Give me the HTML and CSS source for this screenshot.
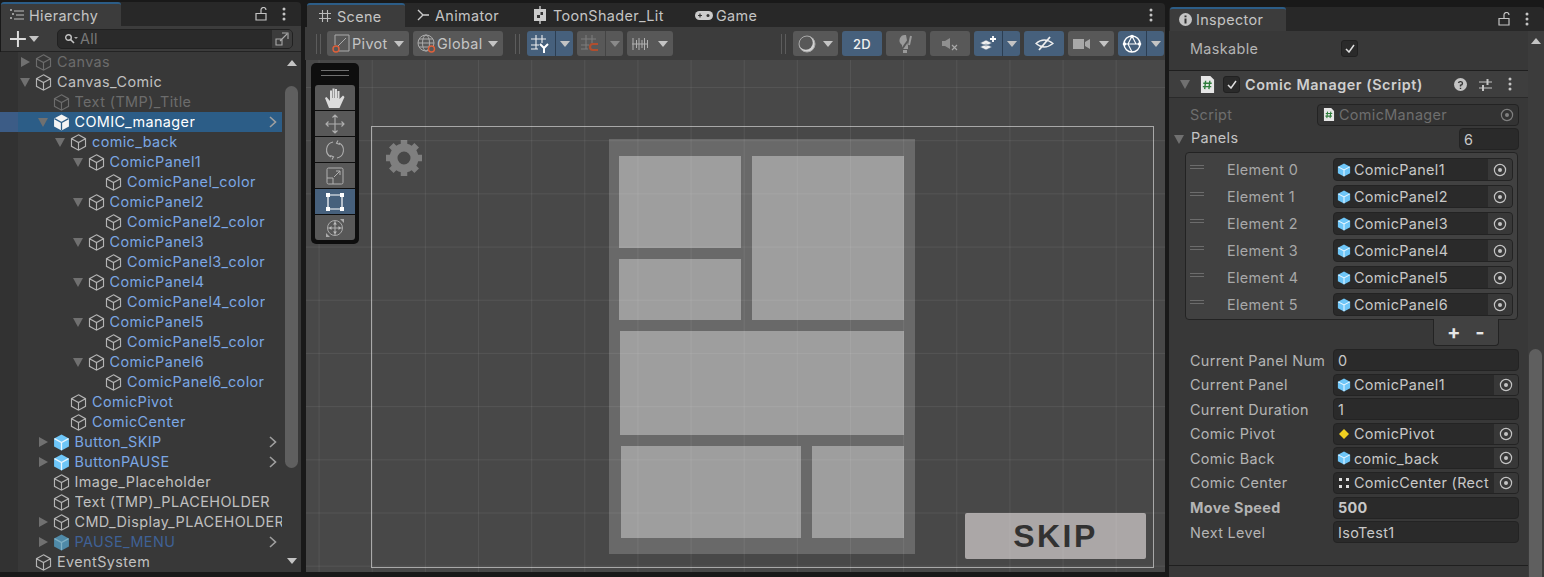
FILE: index.html
```html
<!DOCTYPE html>
<html>
<head>
  <meta charset="UTF-8">
  <title>Unity Editor</title>
  <link rel="stylesheet" href="styles.css">
</head>
<body>
  <svg class="defs" width="0" height="0">
    <symbol id="cube" viewBox="0 0 16 16">
      <path d="M8 .8 14.6 4.4V11.6L8 15.2 1.4 11.6V4.4ZM1.4 4.4 8 8 14.6 4.4M8 8V15.2" fill="none" stroke="currentColor" stroke-width="1.1"/>
    </symbol>
    <symbol id="prefab" viewBox="0 0 16 16">
      <path d="M8 .5 15 4.2V11.8L8 15.5 1 11.8V4.2Z" fill="currentColor"/>
      <path class="seam" d="M1.4 4.4 8 8 14.6 4.4M8 8V15.2" fill="none" stroke-width="1.2"/>
    </symbol>
    <symbol id="chev" viewBox="0 0 8 12">
      <path d="M1 1 6.5 6 1 11" fill="none" stroke="currentColor" stroke-width="1.6"/>
    </symbol>
    <symbol id="lock" viewBox="0 0 12 14">
      <path d="M1 6.5H11V13H1ZM6 6.5V3A2.5 2.5 0 0 1 11 3" fill="none" stroke="currentColor" stroke-width="1.2"/>
    </symbol>
    <symbol id="dots" viewBox="0 0 4 14">
      <circle cx="2" cy="2" r="1.5" fill="currentColor"/><circle cx="2" cy="7" r="1.5" fill="currentColor"/><circle cx="2" cy="12" r="1.5" fill="currentColor"/>
    </symbol>
    <symbol id="target" viewBox="0 0 14 14">
      <circle cx="7" cy="7" r="5.6" fill="none" stroke="currentColor" stroke-width="1.2"/><circle cx="7" cy="7" r="2" fill="currentColor"/>
    </symbol>
    <symbol id="script" viewBox="0 0 16 18">
      <path d="M1 0H11L15 4V18H1Z" fill="#e6e6e6"/>
      <path d="M6 5 5 14M10.500 5 9.500 14M3.500 7.700H12.500M3 11.300H12" stroke="#2f7d3c" stroke-width="1.5"/>
    </symbol>
  </svg>

  <section class="panel hierarchy">
    <div class="tabbar">
      <div class="tab active hier-tab">
        <svg class="tab-icon" width="14" height="12" viewBox="0 0 14 12"><path d="M4 2H14M6 6H14M4 10H14" stroke="#bbb" stroke-width="1.2"/><path d="M0 1H2M2 5H4M0 9H2" stroke="#bbb" stroke-width="1.6"/></svg>
        <span>Hierarchy</span>
      </div>
      <div class="tab-actions">
        <svg class="lock" width="12" height="14"><use href="#lock"/></svg>
        <svg class="dots" width="4" height="14"><use href="#dots"/></svg>
      </div>
    </div>
    <div class="hier-toolbar">
      <svg class="plus" width="16" height="16" viewBox="0 0 16 16"><path d="M8 0V16M0 8H16" stroke="#ddd" stroke-width="2"/></svg>
      <span class="caret"></span>
      <div class="search">
        <svg width="14" height="12" viewBox="0 0 14 12"><circle cx="4.500" cy="4.500" r="2.800" fill="none" stroke="#c4c4c4" stroke-width="1.400"/><path d="M6.500 6.500 10 10" stroke="#c4c4c4" stroke-width="1.600"/><path d="M10 4H14L12 6Z" fill="#aaa"/></svg>
        <span>All</span>
        <div class="search-btn">
          <svg width="14" height="14" viewBox="0 0 14 14"><path d="M1 7V13H7V7ZM7 1H13V7M5 9 12 2" fill="none" stroke="#aaa" stroke-width="1.100"/></svg>
        </div>
      </div>
    </div>
    <div class="hier-body">
      <div class="tree">
        <div class="row l0 off"><i class="arrow right"></i><svg class="ico"><use href="#cube"/></svg><span>Canvas</span></div>
        <div class="row l0"><i class="arrow down"></i><svg class="ico"><use href="#cube"/></svg><span>Canvas_Comic</span></div>
        <div class="row l1 off"><i class="arrow none"></i><svg class="ico"><use href="#cube"/></svg><span>Text (TMP)_Title</span></div>
        <div class="row l1 selected"><i class="arrow down"></i><svg class="ico"><use href="#prefab"/></svg><span>COMIC_manager</span><svg class="chev"><use href="#chev"/></svg></div>
        <div class="row l2 blue"><i class="arrow down"></i><svg class="ico"><use href="#cube"/></svg><span>comic_back</span></div>
        <div class="row l3 blue"><i class="arrow down"></i><svg class="ico"><use href="#cube"/></svg><span>ComicPanel1</span></div>
        <div class="row l4 blue"><i class="arrow none"></i><svg class="ico"><use href="#cube"/></svg><span>ComicPanel_color</span></div>
        <div class="row l3 blue"><i class="arrow down"></i><svg class="ico"><use href="#cube"/></svg><span>ComicPanel2</span></div>
        <div class="row l4 blue"><i class="arrow none"></i><svg class="ico"><use href="#cube"/></svg><span>ComicPanel2_color</span></div>
        <div class="row l3 blue"><i class="arrow down"></i><svg class="ico"><use href="#cube"/></svg><span>ComicPanel3</span></div>
        <div class="row l4 blue"><i class="arrow none"></i><svg class="ico"><use href="#cube"/></svg><span>ComicPanel3_color</span></div>
        <div class="row l3 blue"><i class="arrow down"></i><svg class="ico"><use href="#cube"/></svg><span>ComicPanel4</span></div>
        <div class="row l4 blue"><i class="arrow none"></i><svg class="ico"><use href="#cube"/></svg><span>ComicPanel4_color</span></div>
        <div class="row l3 blue"><i class="arrow down"></i><svg class="ico"><use href="#cube"/></svg><span>ComicPanel5</span></div>
        <div class="row l4 blue"><i class="arrow none"></i><svg class="ico"><use href="#cube"/></svg><span>ComicPanel5_color</span></div>
        <div class="row l3 blue"><i class="arrow down"></i><svg class="ico"><use href="#cube"/></svg><span>ComicPanel6</span></div>
        <div class="row l4 blue"><i class="arrow none"></i><svg class="ico"><use href="#cube"/></svg><span>ComicPanel6_color</span></div>
        <div class="row l2 blue"><i class="arrow none"></i><svg class="ico"><use href="#cube"/></svg><span>ComicPivot</span></div>
        <div class="row l2 blue"><i class="arrow none"></i><svg class="ico"><use href="#cube"/></svg><span>ComicCenter</span></div>
        <div class="row l1 blue"><i class="arrow right"></i><svg class="ico pf"><use href="#prefab"/></svg><span>Button_SKIP</span><svg class="chev"><use href="#chev"/></svg></div>
        <div class="row l1 blue"><i class="arrow right"></i><svg class="ico pf"><use href="#prefab"/></svg><span>ButtonPAUSE</span><svg class="chev"><use href="#chev"/></svg></div>
        <div class="row l1"><i class="arrow none"></i><svg class="ico"><use href="#cube"/></svg><span>Image_Placeholder</span></div>
        <div class="row l1"><i class="arrow none"></i><svg class="ico"><use href="#cube"/></svg><span>Text (TMP)_PLACEHOLDER</span></div>
        <div class="row l1"><i class="arrow right"></i><svg class="ico"><use href="#cube"/></svg><span>CMD_Display_PLACEHOLDER</span></div>
        <div class="row l1 blue dim"><i class="arrow right"></i><svg class="ico pf"><use href="#prefab"/></svg><span>PAUSE_MENU</span><svg class="chev"><use href="#chev"/></svg></div>
        <div class="row l0"><i class="arrow none"></i><svg class="ico"><use href="#cube"/></svg><span>EventSystem</span></div>
      </div>
      <div class="scrollbar hier-scroll">
        <i class="sb-up"></i>
        <div class="sb-thumb"></div>
        <i class="sb-down"></i>
      </div>
    </div>
  </section>

  <section class="panel scene">
    <div class="tabbar">
      <div class="tab active scene-tab">
        <svg width="12" height="12" viewBox="0 0 12 12"><path d="M3.500 0V12M8.500 0V12M0 3.500H12M0 8.500H12" stroke="#bbb" stroke-width="1.100"/></svg>
        <span>Scene</span>
      </div>
      <div class="tab anim-tab">
        <svg width="13" height="12" viewBox="0 0 13 12"><path d="M1 1 6 6 1 11M6 6H12" fill="none" stroke="#ccc" stroke-width="1.400"/></svg>
        <span>Animator</span>
      </div>
      <div class="tab toon-tab">
        <svg width="14" height="18" viewBox="0 0 14 18"><path d="M1 3H13V15H1Z" fill="#ccc"/><path d="M6 0H8V3H6ZM6 15H8V18H6Z" fill="#999"/><path d="M4 9H7V12H4ZM7.500 6H10V9H7.500Z" fill="#333"/></svg>
        <span>ToonShader_Lit</span>
      </div>
      <div class="tab game-tab">
        <svg width="18" height="11" viewBox="0 0 18 11"><rect y="1" width="18" height="9" rx="4.500" fill="#ccc"/><path d="M3 5.500H7M5 3.500V7.500" stroke="#333" stroke-width="1.200"/><circle cx="13" cy="5.500" r="1.500" fill="#333"/></svg>
        <span>Game</span>
      </div>
      <div class="tab-actions">
        <svg class="dots" width="4" height="14"><use href="#dots"/></svg>
      </div>
    </div>
    <div class="scene-toolbar">
      <i class="grip"></i>
      <div class="btn pivot">
        <svg width="18" height="20" viewBox="0 0 18 20"><path d="M3 1H17V17H7M3 11V1M14 4 6 12" fill="none" stroke="#aaa" stroke-width="1"/><circle cx="4" cy="15" r="3" fill="none" stroke="#e0603a" stroke-width="1.400"/></svg>
        <span>Pivot</span><b class="caret"></b>
      </div>
      <div class="btn global">
        <svg width="20" height="20" viewBox="0 0 20 20"><circle cx="9" cy="9" r="8" fill="none" stroke="#aaa"/><ellipse cx="9" cy="9" rx="3.500" ry="8" fill="none" stroke="#aaa"/><path d="M1 9H17M2 5H16M2 13H16" stroke="#aaa"/><circle cx="14.500" cy="15" r="3" fill="#585858" stroke="#e0603a" stroke-width="1.400"/></svg>
        <span>Global</span><b class="caret"></b>
      </div>
      <i class="grip gap-l"></i>
      <div class="btn split on grid-btn">
        <span class="main">
          <svg width="20" height="18" viewBox="0 0 20 18"><path d="M5 0V14M11 0V8M0 4H15M0 10H8M0 14H7" stroke="#eee" stroke-width="1.100"/><path d="M9 9 13 13 17 9M13 13V18" fill="none" stroke="#fff" stroke-width="2"/></svg>
        </span>
        <span class="drop"><b class="caret"></b></span>
      </div>
      <div class="btn split snap-btn">
        <span class="main">
          <svg width="20" height="18" viewBox="0 0 20 18"><path d="M5 0V14M11 0V8M0 4H15M0 10H8M0 14H7" stroke="#7c7c7c" stroke-width="1.100"/><path d="M17 9H12A3 3 0 0 0 12 15H17" fill="none" stroke="#b04e2e" stroke-width="2.200"/></svg>
        </span>
        <span class="drop nosep"><b class="caret dim"></b></span>
      </div>
      <div class="btn ruler-btn">
        <svg width="17" height="14" viewBox="0 0 17 14"><path d="M0 7H16M1 1V13M4.500 3V11M7 1V13M10 3V11M12.500 1V13M15.500 3V11" stroke="#b0b0b0"/></svg>
        <b class="caret"></b>
      </div>

      <i class="grip push"></i>
      <div class="btn shade-btn">
        <svg width="18" height="18" viewBox="0 0 18 18"><circle cx="9" cy="9" r="8" fill="#d2d2d2"/><circle cx="7.800" cy="7.800" r="7" fill="#585858"/><circle cx="9" cy="9" r="8" fill="none" stroke="#a8a8a8"/></svg>
        <b class="caret"></b>
      </div>
      <div class="btn on txt2d">2D</div>
      <div class="btn icon-only">
        <svg width="18" height="20" viewBox="0 0 18 20"><path d="M9 1A5.500 5.500 0 0 0 5 11V15H11V12Z" fill="#9a9a9a"/><path d="M6 16H10V19H6Z" fill="#9a9a9a"/><path d="M15 1 5 15" stroke="#585858" stroke-width="2"/><path d="M14 2 12 11" stroke="#9a9a9a" stroke-width="2"/></svg>
      </div>
      <div class="btn icon-only">
        <svg width="16" height="14" viewBox="0 0 16 14"><path d="M0 4H3L8 1V12L3 9H0Z" fill="#909090"/><path d="M10 8 15 13M15 8 10 13" stroke="#a8a8a8" stroke-width="1.200"/></svg>
      </div>
      <div class="btn split on fx-btn">
        <span class="main">
          <svg width="18" height="16" viewBox="0 0 18 16"><path d="M1 7 7 4 13 7 7 10ZM1 11 7 8 13 11 7 14Z" fill="#f0f0f0" stroke="#46607c" stroke-width=".6"/><path d="M14 0V6M11 3H17" stroke="#fff" stroke-width="1.800"/></svg>
        </span>
        <span class="drop"><b class="caret"></b></span>
      </div>
      <div class="btn on icon-only hide-btn">
        <svg width="19" height="15" viewBox="0 0 19 15"><path d="M1 7.500Q9 .5 18 7.500 9 14.500 1 7.500Z" fill="none" stroke="#eee" stroke-width="1.300"/><path d="M4 14 15 1" stroke="#eee" stroke-width="1.800"/></svg>
      </div>
      <div class="btn cam-btn">
        <svg width="17" height="12" viewBox="0 0 17 12"><path d="M0 1H11V11H0ZM12 4 17 1V11L12 8Z" fill="#a8a8a8"/></svg>
        <b class="caret"></b>
      </div>
      <div class="btn split on gizmo-btn">
        <span class="main">
          <svg width="20" height="20" viewBox="0 0 20 20"><circle cx="10" cy="10" r="8" fill="none" stroke="#fff" stroke-width="1.400"/><path d="M2 10H18M10 2 6 10 10 18M10 2 14 10" fill="none" stroke="#fff" stroke-width="1.100"/><circle cx="10" cy="2.500" r="1.800" fill="#fff"/><circle cx="2.500" cy="10" r="1.800" fill="#fff"/><circle cx="17.500" cy="10" r="1.800" fill="#fff"/></svg>
        </span>
        <span class="drop"><b class="caret"></b></span>
      </div>
    </div>

    <div class="viewport">
      <div class="frame"></div>
      <svg class="gear" width="38" height="38" viewBox="0 0 38 38"><circle cx="19" cy="19" r="10.500" fill="none" stroke="#7f7f7f" stroke-width="8"/><g stroke="#7f7f7f" stroke-width="6.500"><path d="M19 1V8M19 30V37M1 19H8M30 19H37M6.300 6.300 11 11M27 27 31.700 31.700M6.300 31.700 11 27M27 11 31.700 6.300"/></g></svg>
      <div class="page"></div>
      <div class="cell c1"></div>
      <div class="cell c2"></div>
      <div class="cell c3"></div>
      <div class="cell c4"></div>
      <div class="cell c5"></div>
      <div class="cell c6"></div>
      <div class="skip">SKIP</div>
      <div class="grid-lines"></div>
      <div class="tools">
        <div class="tools-grip"></div>
        <div class="tool">
          <svg width="22" height="22" viewBox="0 0 22 22"><path d="M5 21 1 11 2.500 10 6 14V3.500H8V11H8.500V1.500H10.500V11H11V2H13V11H13.500V4H15.500V12L19 8.500 20.500 10 15.500 21Z" fill="#dcdcdc"/></svg>
        </div>
        <div class="tool">
          <svg width="20" height="20" viewBox="0 0 20 20"><path d="M10 1V19M1 10H19M7.500 3.500 10 1 12.500 3.500M7.500 16.500 10 19 12.500 16.500M3.500 7.500 1 10 3.500 12.500M16.500 7.500 19 10 16.500 12.500" fill="none" stroke="#b0b0b0" stroke-width="1.100"/></svg>
        </div>
        <div class="tool">
          <svg width="20" height="20" viewBox="0 0 20 20"><path d="M8 2A8 8 0 0 0 6 17M12 18A8 8 0 0 0 14 3M13 .5 11.500 3.200 14.800 4.500M7 19.500 8.500 16.800 5.200 15.500" fill="none" stroke="#b0b0b0" stroke-width="1.100"/></svg>
        </div>
        <div class="tool">
          <svg width="18" height="18" viewBox="0 0 18 18"><rect x="1" y="1" width="16" height="16" rx="1.500" fill="none" stroke="#b0b0b0"/><path d="M1 11H7V17M8 10 14 4M10 4H14V8" fill="none" stroke="#b0b0b0"/></svg>
        </div>
        <div class="tool on">
          <svg width="18" height="18" viewBox="0 0 18 18"><path d="M3 2H15M3 16H15M2 3V15M16 3V15" stroke="#fff" stroke-width="1.200"/><path d="M0 0H4V4H0ZM14 0H18V4H14ZM0 14H4V18H0ZM14 14H18V18H14Z" fill="#fff"/></svg>
        </div>
        <div class="tool">
          <svg width="20" height="20" viewBox="0 0 20 20"><circle cx="10" cy="10" r="7.500" fill="none" stroke="#aaa"/><path d="M10 3V17M3 10H17" stroke="#aaa" stroke-width="1.100"/><path d="M10 4 8 6.500H12ZM10 16 8 13.500H12ZM4 10 6.500 8V12ZM16 10 13.500 8V12Z" fill="#bbb"/><path d="M15 1H19V5ZM1 15V19H5Z" fill="#aaa"/></svg>
        </div>
      </div>
    </div>
  </section>

  <section class="panel inspector">
    <div class="tabbar">
      <div class="tab active insp-tab">
        <svg width="13" height="13" viewBox="0 0 13 13"><circle cx="6.500" cy="6.500" r="6.500" fill="#c4c4c4"/><path d="M5.500 2.500H7.500V4.300H5.500ZM5.500 5.500H7.500V10.500H5.500Z" fill="#333"/></svg>
        <span>Inspector</span>
      </div>
      <div class="tab-actions">
        <svg class="lock" width="12" height="14"><use href="#lock"/></svg>
        <svg class="dots" width="4" height="14"><use href="#dots"/></svg>
      </div>
    </div>
    <div class="insp-body">
      <div class="insp-main">
        <div class="prop maskable">
          <label>Maskable</label>
          <span class="check"><svg width="10" height="9" viewBox="0 0 10 9"><path d="M1 5 4 8 9 1" fill="none" stroke="#e0e0e0" stroke-width="1.500"/></svg></span>
        </div>
        <div class="comp-head">
          <i class="arrow down"></i>
          <svg class="script-ico" width="15" height="17"><use href="#script"/></svg>
          <span class="check"><svg width="10" height="9" viewBox="0 0 10 9"><path d="M1 5 4 8 9 1" fill="none" stroke="#e0e0e0" stroke-width="1.500"/></svg></span>
          <strong>Comic Manager (Script)</strong>
          <div class="comp-actions">
            <svg width="13" height="13" viewBox="0 0 13 13"><circle cx="6.500" cy="6.500" r="6.500" fill="#c4c4c4"/><path d="M4.500 5A2 1.800 0 1 1 6.500 7.200V8.500M6.500 9.700V11" fill="none" stroke="#333" stroke-width="1.400"/></svg>
            <svg width="13" height="13" viewBox="0 0 13 13"><path d="M0 4H13M0 10H13" stroke="#c4c4c4"/><path d="M8.500 1V7M4 7V13" stroke="#c4c4c4" stroke-width="2"/></svg>
            <svg class="dots" width="4" height="14"><use href="#dots"/></svg>
          </div>
        </div>

        <div class="prop script-row off">
          <label>Script</label>
          <div class="field obj disabled">
            <svg class="mini" width="12" height="13"><use href="#script"/></svg>
            <span class="val">ComicManager</span>
            <svg class="pick" width="14" height="14"><use href="#target"/></svg>
          </div>
        </div>
        <div class="panels-row">
          <i class="arrow down"></i>
          <span>Panels</span>
          <div class="field size-field">6</div>
        </div>
        <div class="list">
          <div class="elem"><i class="handle"></i><label>Element 0</label><div class="field obj"><svg class="mini"><use href="#prefab"/></svg><span class="val">ComicPanel1</span><span class="pick-box"><svg width="14" height="14"><use href="#target"/></svg></span></div></div>
          <div class="elem"><i class="handle"></i><label>Element 1</label><div class="field obj"><svg class="mini"><use href="#prefab"/></svg><span class="val">ComicPanel2</span><span class="pick-box"><svg width="14" height="14"><use href="#target"/></svg></span></div></div>
          <div class="elem"><i class="handle"></i><label>Element 2</label><div class="field obj"><svg class="mini"><use href="#prefab"/></svg><span class="val">ComicPanel3</span><span class="pick-box"><svg width="14" height="14"><use href="#target"/></svg></span></div></div>
          <div class="elem"><i class="handle"></i><label>Element 3</label><div class="field obj"><svg class="mini"><use href="#prefab"/></svg><span class="val">ComicPanel4</span><span class="pick-box"><svg width="14" height="14"><use href="#target"/></svg></span></div></div>
          <div class="elem"><i class="handle"></i><label>Element 4</label><div class="field obj"><svg class="mini"><use href="#prefab"/></svg><span class="val">ComicPanel5</span><span class="pick-box"><svg width="14" height="14"><use href="#target"/></svg></span></div></div>
          <div class="elem"><i class="handle"></i><label>Element 5</label><div class="field obj"><svg class="mini"><use href="#prefab"/></svg><span class="val">ComicPanel6</span><span class="pick-box"><svg width="14" height="14"><use href="#target"/></svg></span></div></div>
        </div>
        <div class="list-foot">
          <div class="add-remove"><span>+</span><span>-</span></div>
        </div>

        <div class="props">
          <div class="prop"><label>Current Panel Num</label><div class="field">0</div></div>
          <div class="prop"><label>Current Panel</label><div class="field obj"><svg class="mini"><use href="#prefab"/></svg><span class="val">ComicPanel1</span><span class="pick-box"><svg width="14" height="14"><use href="#target"/></svg></span></div></div>
          <div class="prop"><label>Current Duration</label><div class="field">1</div></div>
          <div class="prop"><label>Comic Pivot</label><div class="field obj"><svg class="mini" viewBox="0 0 14 14"><path d="M7 2 12 7 7 12 2 7Z" fill="#f0d020"/></svg><span class="val">ComicPivot</span><span class="pick-box"><svg width="14" height="14"><use href="#target"/></svg></span></div></div>
          <div class="prop"><label>Comic Back</label><div class="field obj"><svg class="mini"><use href="#prefab"/></svg><span class="val">comic_back</span><span class="pick-box"><svg width="14" height="14"><use href="#target"/></svg></span></div></div>
          <div class="prop"><label>Comic Center</label><div class="field obj"><svg class="mini" viewBox="0 0 14 14"><path d="M2 2H5V5H2ZM9 2H12V5H9ZM2 9H5V12H2ZM9 9H12V12H9Z" fill="#ddd"/></svg><span class="val">ComicCenter (Rect T</span><span class="pick-box"><svg width="14" height="14"><use href="#target"/></svg></span></div></div>
          <div class="prop changed"><label>Move Speed</label><div class="field">500</div></div>
          <div class="prop"><label>Next Level</label><div class="field">IsoTest1</div></div>
        </div>
        <div class="comp-end"></div>
      </div>
      <div class="scrollbar insp-scroll">
        <i class="sb-up"></i>
        <div class="sb-thumb"></div>
      </div>
    </div>
  </section>
</body>
</html>
```

FILE: styles.css
```css
* {
  box-sizing: border-box;
}
html, body {
  height: 100%;
}
body {
  margin: 0;
  display: flex;
  height: 577px;
  overflow: hidden;
  background: #191919;
  font-family: Inter, "Noto Sans", sans-serif;
  font-size: 14.4px;
  letter-spacing: .36px;
  color: #c4c4c4;
}
.defs {
  position: absolute;
}
.seam {
  stroke: var(--seam, #e8f6ff);
}
.panel {
  display: flex;
  flex-direction: column;
  overflow: hidden;
}

/* tabs */
.tabbar {
  display: flex;
  align-items: flex-end;
  flex: none;
  background: #282828;
  border-radius: 4px 4px 0 0;
}
.tab {
  display: flex;
  align-items: center;
  height: 24px;
  gap: 7px;
  color: #c4c4c4;
  white-space: nowrap;
}
.tab.active {
  background: #3c3c3c;
  border-top: 2px solid #2c5d87;
  border-radius: 3px 3px 0 0;
}
.tab-actions {
  margin-left: auto;
  display: flex;
  align-items: center;
  align-self: center;
  gap: 15px;
  color: #c4c4c4;
}

/* hierarchy */
.hierarchy {
  width: 301px;
  margin: 2px 4px 5px 0;
}
.hierarchy .tabbar {
  height: 24px;
  margin-left: 1px;
}
.hier-tab {
  width: 120px;
  padding-left: 9px;
  gap: 5px;
}
.hierarchy .tab-actions {
  padding-right: 15px;
}
.hier-toolbar {
  display: flex;
  align-items: center;
  flex: none;
  height: 26px;
  padding: 0 8px 0 9px;
  margin-left: 1px;
  background: #3c3c3c;
  border-bottom: 1px solid #232323;
}
.caret {
  display: inline-block;
  width: 0;
  height: 0;
  border: 5px solid transparent;
  border-top: 6px solid #c4c4c4;
  border-bottom: 0;
}
.caret.dim {
  border-top-color: #8a8a8a;
}
.plus {
  margin-right: 3px;
}
.search {
  display: flex;
  align-items: center;
  gap: 2px;
  width: 238px;
  height: 20px;
  margin-left: 18px;
  padding-left: 6px;
  background: #2a2a2a;
  border: 1px solid #212121;
  border-radius: 5px;
  color: #787878;
}
.search-btn {
  margin-left: auto;
  display: flex;
  align-items: center;
  justify-content: center;
  width: 20px;
  height: 18px;
  background: #3c3c3c;
  border-radius: 0 4px 4px 0;
}
.hier-body {
  display: flex;
  flex: 1;
  min-height: 0;
  background: #383838;
}
.tree {
  width: 282px;
  flex: none;
  overflow: hidden;
  background: linear-gradient(90deg, #323232 18px, #383838 18px);
  letter-spacing: .42px;
}
.row {
  display: flex;
  align-items: center;
  height: 20px;
  white-space: nowrap;
  overflow: hidden;
  color: #c0c0c0;
}
.row.l0 { padding-left: 18px; }
.row.l1 { padding-left: 35.5px; }
.row.l2 { padding-left: 53px; }
.row.l3 { padding-left: 70.5px; }
.row.l4 { padding-left: 88px; }
.row.off { color: #6c6c6c; }
.row.blue { color: #7ba7e4; }
.row.blue.dim { color: #3f6196; }
.row.selected {
  --seam: #2c5d87;
  background: linear-gradient(90deg, #3c5c86 18px, #2c5d87 18px);
  color: #fff;
}
.row .ico {
  flex: none;
  width: 17px;
  height: 17px;
  margin-right: 5px;
  color: #b4b4b4;
}
.row.off .ico { color: #6c6c6c; }
.row.selected .ico { color: #f4f4f4; }
.row .ico.pf { color: #6ec6f8; }
.row.dim .ico.pf { color: #4f8aa8; --seam: #7fb0c4; }
.row span {
  overflow: hidden;
  padding-bottom: 2px;
}
.row .chev {
  flex: none;
  width: 8px;
  height: 12px;
  margin-left: auto;
  margin-right: 5px;
  color: #a0a0a0;
}
.arrow {
  display: block;
  flex: none;
  width: 17px;
  height: 10px;
}
.arrow.right,
.arrow.down {
  position: relative;
}
.arrow.right::before {
  content: "";
  position: absolute;
  left: 3px;
  top: 0;
  border: 5px solid transparent;
  border-left: 9px solid #707070;
  border-right: 0;
}
.arrow.down::before {
  content: "";
  position: absolute;
  left: 2px;
  top: 1px;
  border: 5.500px solid transparent;
  border-top: 9px solid #707070;
  border-bottom: 0;
}
.scrollbar {
  position: relative;
  flex: none;
}
.sb-up,
.sb-down {
  position: absolute;
  left: 50%;
  margin-left: -5px;
  border: 5px solid transparent;
}
.sb-up {
  border-bottom: 6px solid #c4c4c4;
  border-top: 0;
}
.sb-down {
  border-top: 6px solid #c4c4c4;
  border-bottom: 0;
}
.sb-thumb {
  position: absolute;
  background: #5f5f5f;
  border-radius: 7px;
}
.hier-scroll {
  width: 19px;
}
.hier-scroll .sb-up { top: 8px; }
.hier-scroll .sb-down { bottom: 8px; }
.hier-scroll .sb-thumb {
  left: 3px;
  width: 13px;
  top: 34px;
  height: 382px;
}

/* scene */
.scene {
  width: 860px;
  margin: 3px 4px 5px 0;
}
.scene .tabbar {
  height: 24px;
  margin-left: 2px;
}
.scene-tab {
  width: 98px;
  padding-left: 12px;
  gap: 6px;
}
.anim-tab {
  width: 119px;
  padding-left: 12px;
  gap: 5px;
}
.toon-tab {
  width: 161px;
  padding-left: 9px;
  gap: 6px;
}
.game-tab {
  padding-left: 10px;
  gap: 3px;
}
.scene .tab-actions {
  padding-right: 12px;
}
.scene-toolbar {
  display: flex;
  align-items: center;
  flex: none;
  gap: 4px;
  height: 33px;
  padding: 0 1px 0 11px;
  background: #3c3c3c;
}
.grip {
  flex: none;
  width: 5px;
  height: 20px;
  margin-right: 2px;
  border-left: 1px solid #5c5c5c;
  border-right: 1px solid #5c5c5c;
}
.grip.gap-l {
  margin-left: 8px;
  margin-right: 3px;
}
.grip.push {
  margin-left: auto;
  margin-right: 3px;
}
.btn {
  display: flex;
  align-items: center;
  flex: none;
  height: 25px;
  gap: 6px;
  padding: 0 5px;
  background: #585858;
  border-radius: 3px;
  color: #c4c4c4;
}
.btn.on {
  background: #46607c;
  color: #f0f0f0;
}
.btn.pivot { width: 82px; }
.btn.global { width: 90px; gap: 0; padding-left: 4px; }
.btn.pivot span { margin-left: -4px; }
.btn .caret { margin-left: auto; }
.btn.split {
  padding: 0;
  gap: 0;
}
.split .main {
  display: flex;
  align-items: center;
  justify-content: center;
  flex: 1;
  height: 100%;
}
.split .drop {
  display: flex;
  align-items: center;
  justify-content: center;
  width: 18px;
  height: 100%;
  border-left: 1px solid #2c3e52;
}
.split .drop .caret {
  margin: 0;
}
.split .drop.nosep {
  border-left: 1px solid #444;
}
.grid-btn, .snap-btn, .fx-btn, .gizmo-btn {
  width: 46px;
}
.ruler-btn { width: 46px; }
.shade-btn { width: 45px; }
.txt2d {
  width: 40px;
  justify-content: center;
  font-weight: 500;
  font-size: 13px;
}
.icon-only {
  width: 40px;
  justify-content: center;
}
.cam-btn { width: 46px; }
.viewport {
  position: relative;
  flex: 1;
  margin-left: 1px;
  background: #484848;
  overflow: hidden;
}
/* everything inside the viewport sits at its own place on the scene canvas */
.frame {
  position: absolute;
  left: 65px;
  top: 66px;
  width: 783px;
  height: 442px;
  border: 1px solid #a8a8a8;
}
.gear {
  position: absolute;
  left: 79px;
  top: 79px;
}
.page {
  position: absolute;
  left: 303px;
  top: 79px;
  width: 306px;
  height: 415px;
  background: #696969;
}
.cell {
  position: absolute;
  background: #9e9e9e;
}
.c1 { left: 313px; top: 96px; width: 122px; height: 92px; }
.c2 { left: 446px; top: 96px; width: 152px; height: 164px; }
.c3 { left: 313px; top: 199px; width: 122px; height: 61px; }
.c4 { left: 314px; top: 271px; width: 284px; height: 104px; }
.c5 { left: 315px; top: 386px; width: 180px; height: 92px; }
.c6 { left: 506px; top: 386px; width: 92px; height: 92px; }
.skip {
  position: absolute;
  left: 659px;
  top: 453px;
  width: 181px;
  height: 46px;
  background: #aba7a7;
  border-radius: 2px;
  color: #323232;
  font-family: "Liberation Sans", sans-serif;
  font-weight: 700;
  font-size: 32px;
  letter-spacing: 2.5px;
  text-align: center;
  line-height: 47px;
}
.grid-lines {
  position: absolute;
  inset: 0;
  pointer-events: none;
  background-image:
    linear-gradient(90deg, rgba(255, 255, 255, .065) 1px, transparent 1px),
    linear-gradient(rgba(255, 255, 255, .065) 1px, transparent 1px);
  background-size: 53.15px 53.2px;
  background-position: 12.6px 27px;
}
.tools {
  position: absolute;
  left: 5px;
  top: 3px;
  width: 48px;
  height: 181px;
  padding: 0 4px;
  background: #0e0e0e;
  border-radius: 5px;
}
.tools-grip {
  height: 6px;
  margin: 7px 6px 9px;
  border-top: 1px solid #707070;
  border-bottom: 1px solid #707070;
}
.tool {
  display: flex;
  align-items: center;
  justify-content: center;
  height: 25px;
  margin-bottom: 1px;
  background: #585858;
}
.tool:nth-child(2) {
  border-radius: 3px 3px 0 0;
}
.tool:last-child {
  border-radius: 0 0 3px 3px;
}
.tool.on {
  background: #46607c;
}

/* inspector */
.inspector {
  flex: 1;
  margin-top: 7px;
}
.inspector .tabbar {
  height: 24px;
}
.insp-tab {
  width: 116px;
  padding: 0 0 2px 9px;
  margin-left: 1px;
  gap: 4px;
}
.inspector .tab-actions {
  padding-right: 15px;
}
.insp-body {
  display: flex;
  flex: 1;
  min-height: 0;
  background: #3c3c3c;
}
.insp-main {
  width: 359px;
  flex: none;
  background: #383838;
}
.insp-scroll {
  flex: 1;
}
.insp-scroll .sb-up { top: 7px; }
.insp-scroll .sb-thumb {
  left: 1px;
  width: 13px;
  top: 318px;
  height: 240px;
}
.prop {
  display: flex;
  align-items: center;
  padding-left: 21px;
}
.prop label,
.elem label {
  flex: none;
  color: #b4b4b4;
  white-space: nowrap;
}
.check {
  display: flex;
  align-items: center;
  justify-content: center;
  flex: none;
  width: 17px;
  height: 17px;
  background: #2a2a2a;
  border: 1px solid #212121;
  border-radius: 3px;
}
.maskable {
  height: 40px;
  padding-bottom: 4px;
  border-bottom: 1px solid #1f1f1f;
}
.maskable label {
  width: 151px;
}
.comp-head {
  display: flex;
  align-items: center;
  height: 27px;
  padding-left: 9px;
  background: #3e3e3e;
  border-bottom: 1px solid #2a2a2a;
}
.comp-head .arrow {
  width: 18px;
}
.script-ico {
  flex: none;
  margin-left: 4px;
  margin-right: 8px;
}
.comp-head strong {
  margin-left: 5px;
  font-weight: 600;
  letter-spacing: .55px;
  color: #cfcfcf;
  white-space: nowrap;
}
.comp-actions {
  display: flex;
  align-items: center;
  gap: 12px;
  margin-left: auto;
  padding-right: 16px;
}
.comp-actions .dots {
  margin-left: 4px;
}
.field {
  display: flex;
  align-items: center;
  flex: none;
  width: 186px;
  height: 22px;
  padding-left: 4px;
  background: #2a2a2a;
  border: 1px solid #232323;
  border-radius: 4px;
  color: #c8c8c8;
  white-space: nowrap;
  overflow: hidden;
}
.obj {
  padding-left: 3px;
  gap: 2px;
}
.mini {
  flex: none;
  width: 14px;
  height: 14px;
  margin-right: 1px;
  color: #6ec6f8;
}
.val {
  flex: 1;
  min-width: 0;
  overflow: hidden;
}
.pick-box {
  display: flex;
  align-items: center;
  justify-content: center;
  flex: none;
  width: 24px;
  height: 100%;
  background: #383838;
  color: #c4c4c4;
}
.script-row {
  height: 33px;
}
.script-row label {
  width: 127px;
  color: #6e6e6e;
}
.field.disabled {
  width: 202px;
  padding-left: 5px;
  background: #333;
  color: #6e6e6e;
  gap: 3px;
}
.field.disabled .mini {
  width: 12px;
  height: 13px;
}
.pick {
  margin-right: 4px;
  color: #808080;
}
.panels-row {
  display: flex;
  align-items: center;
  height: 22px;
  margin-top: -3px;
  padding-left: 3px;
}
.panels-row .arrow {
  width: 19px;
}
.panels-row > span {
  padding-bottom: 4px;
}
.panels-row .size-field {
  width: 60px;
  margin-left: auto;
  margin-right: 9px;
  padding-left: 4px;
}
.list {
  width: 333px;
  margin: 2px 0 0 16px;
  padding: 3px 4px 1px 0;
  background: #414141;
  border: 1px solid #232323;
  border-radius: 4px;
}
.elem {
  display: flex;
  align-items: center;
  height: 27px;
}
.handle {
  flex: none;
  width: 14px;
  height: 4px;
  margin: -6px 23px 0 4px;
  border-top: 1px solid #6c6c6c;
  border-bottom: 1px solid #6c6c6c;
}
.elem label {
  width: 106px;
  color: #a8a8a8;
}
.elem .field {
  width: 180px;
  height: 23px;
}
.list-foot {
  display: flex;
  justify-content: flex-end;
  padding-right: 29px;
  height: 27px;
}
.add-remove {
  display: flex;
  align-items: center;
  justify-content: space-around;
  width: 66px;
  height: 27px;
  margin-top: -1px;
  padding: 0 6px;
  background: #414141;
  border: 1px solid #232323;
  border-top: 0;
  border-radius: 0 0 4px 4px;
  color: #e6e6e6;
  font-size: 20px;
  font-weight: 700;
}
.props {
  display: flex;
  flex-direction: column;
  gap: 2.6px;
  margin-top: 2px;
}
.props .prop label {
  width: 143px;
}
.props .field {
  height: 22px;
}
.props .changed label,
.props .changed .field {
  font-weight: 700;
}
.comp-end {
  height: 1px;
  margin-top: 22px;
  background: #1f1f1f;
}
```
